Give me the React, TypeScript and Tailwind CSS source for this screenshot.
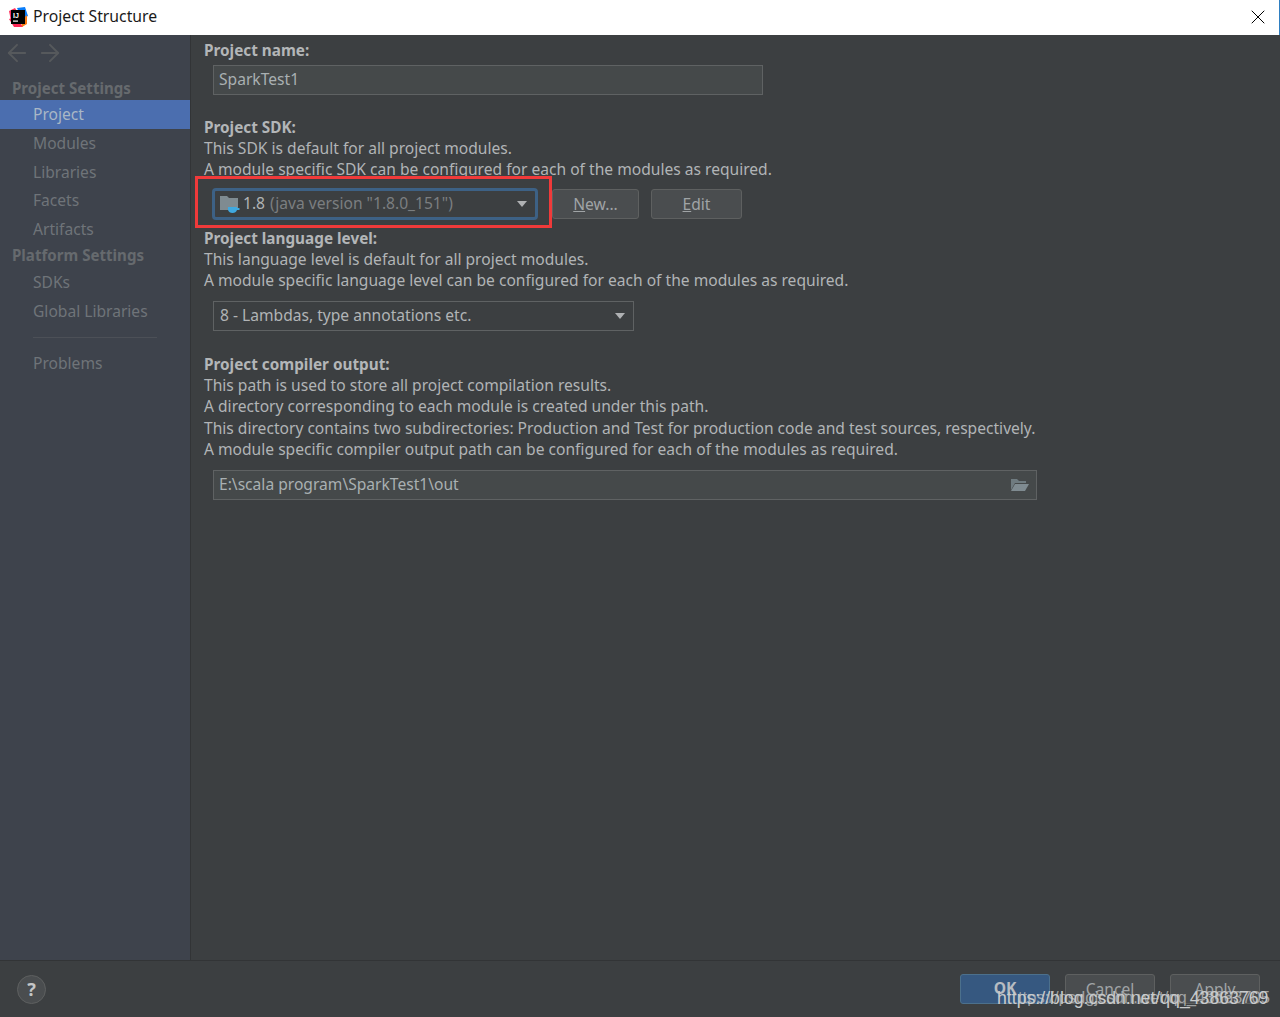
import React from "react";
import { ArrowLeft, ArrowRight, X } from "lucide-react";

function Caret() {
  return <span className="w-0 h-0 border-l-[5.5px] border-r-[5.5px] border-t-[6px] border-l-transparent border-r-transparent border-t-[#afb1b3]" />;
}

function Logo() {
  return (
    <svg width="20" height="20" viewBox="0 0 20 20" className="shrink-0">
      <path d="M1 4 L7 1 L10 6 L3 14 Z" fill="#fe315d" />
      <path d="M9 1 L17 0 L20 9 L14 12 Z" fill="#087cfa" />
      <path d="M1 12 L6 20 L15 20 L8 10 Z" fill="#fe2857" />
      <path d="M13 14 L19 8 L19 17 L14 20 Z" fill="#f97a12" />
      <rect x="3" y="3" width="14" height="14" fill="#000" />
      <text x="5" y="10.5" fill="#fff" fontSize="7" fontWeight="700" fontFamily="'Liberation Sans', sans-serif">IJ</text>
      <rect x="5" y="13.5" width="5" height="1.2" fill="#fff" />
    </svg>
  );
}

function SideItem({ label, active }: { label: string; active?: boolean }) {
  return (
    <div className={"h-[28.5px] pl-[33px] flex items-center text-[15.6px] " + (active ? "bg-[#4b6eaf] text-[#a9b7c6]" : "pt-[2px] text-[#6f7479]")}>
      {label}
    </div>
  );
}

function SideHeading({ label, pad }: { label: string; pad: string }) {
  return <div className={"h-[25px] pl-3 flex items-center text-[15.1px] font-bold text-[#666a6e] " + pad}>{label}</div>;
}

function Btn({ children, w }: { children: React.ReactNode; w: string }) {
  return (
    <div className={"h-[30px] pt-[1px] rounded-[3px] border border-[#5e6060] bg-[#4a4d4f] flex items-center justify-center text-[15.6px] text-[#a0a4a6] " + w}>
      {children}
    </div>
  );
}

function Heading({ children }: { children: React.ReactNode }) {
  return <div className="h-[21px] leading-[21px] text-[15.3px] font-bold text-[#b3b6b8]">{children}</div>;
}

function Line({ children }: { children: React.ReactNode }) {
  return <div className="h-[21px] leading-[21px] whitespace-nowrap">{children}</div>;
}

export default function App() {
  return (
    <div className="w-[1280px] h-[1017px] flex flex-col relative overflow-hidden bg-[#3c3f41] font-['Noto_Sans','Open_Sans',sans-serif] text-[15.6px] text-[#b1b4b6]">
      <header className="h-[35px] shrink-0 bg-white flex items-center pl-[8px] pr-[9px] pb-[2px] border-r border-[#2f7fc1]">
        <Logo />
        <span className="ml-[5px] text-[#1a1a1a] text-[15.75px]">Project Structure</span>
        <X size={24} strokeWidth={1} className="ml-auto text-black" />
      </header>

      <div className="flex-1 flex min-h-0">
        <aside className="w-[191px] shrink-0 bg-[#3e434c] border-r border-[#323436] flex flex-col">
          <div className="h-[36px] pl-[3px] flex items-center gap-[5px] text-[#56595c]">
            <ArrowLeft size={28} strokeWidth={1.7} />
            <ArrowRight size={28} strokeWidth={1.7} />
          </div>
          <div className="mt-[4px]">
            <SideHeading label="Project Settings" pad="pt-[2px]" />
          </div>
          <SideItem label="Project" active />
          <SideItem label="Modules" />
          <SideItem label="Libraries" />
          <SideItem label="Facets" />
          <SideItem label="Artifacts" />
          <SideHeading label="Platform Settings" pad="pb-[0px]" />
          <SideItem label="SDKs" />
          <SideItem label="Global Libraries" />
          <div className="mt-[12px] mb-[11px] ml-[33px] mr-[33px] h-px bg-[#4c5057]" />
          <SideItem label="Problems" />
        </aside>

        <main className="flex-1 pl-[13px] pt-[5px]">
          <Heading>Project name:</Heading>
          <div className="mt-[4px] ml-[9px] w-[550px] h-[30px] border border-[#5f6263] bg-[#45494a] pl-[5px] flex items-center text-[#a9b0b2]">
            SparkTest1
          </div>

          <div className="mt-[22px]"><Heading>Project SDK:</Heading></div>
          <Line>This SDK is default for all project modules.</Line>
          <Line>A module specific SDK can be configured for each of the modules as required.</Line>

          <div className="mt-[8px] ml-[8px] flex items-center">
            <div className="w-[326px] h-[32px] rounded-[4px] border-[3px] border-[#3d6185] bg-[#3c3f41] flex items-center pl-[5px] pr-[8px]">
              <svg width="20" height="20" viewBox="0 0 20 20" className="shrink-0">
                <path d="M0 2 H7 L9 4 H18 V16 H0 Z" fill="#7f8b91" />
                <path d="M8 13 H17 V14 H19.5 V16 H17 Q16 19 12.5 19 Q9 19 8 16 Z" fill="#40a9e0" />
              </svg>
              <span className="ml-[3px] text-[#b1b4b6]">1.8</span>
              <span className="ml-[5px] text-[#7b7e80]">(java version "1.8.0_151")</span>
              <span className="ml-auto flex"><Caret /></span>
            </div>
            <div className="ml-[14px]"><Btn w="w-[87px]"><span><u>N</u>ew...</span></Btn></div>
            <div className="ml-[12px]"><Btn w="w-[91px]"><span><u>E</u>dit</span></Btn></div>
          </div>

          <div className="mt-[8px]"><Heading>Project language level:</Heading></div>
          <Line>This language level is default for all project modules.</Line>
          <Line>A module specific language level can be configured for each of the modules as required.</Line>

          <div className="mt-[10px] ml-[9px] w-[421px] h-[30px] border border-[#5f6263] bg-[#3c3f41] flex items-center pl-[6px] pr-[8px] text-[#b1b4b6]">
            8 - Lambdas, type annotations etc.
            <span className="ml-auto flex"><Caret /></span>
          </div>

          <div className="mt-[23px]"><Heading>Project compiler output:</Heading></div>
          <Line>This path is used to store all project compilation results.</Line>
          <Line>A directory corresponding to each module is created under this path.</Line>
          <div className="mt-px"><Line>This directory contains two subdirectories: Production and Test for production code and test sources, respectively.</Line></div>
          <Line>A module specific compiler output path can be configured for each of the modules as required.</Line>

          <div className="mt-[10px] ml-[9px] w-[824px] h-[30px] border border-[#5f6263] bg-[#45494a] flex items-center pl-[5px] pr-[6px] text-[#a9b0b2]">
            E:\scala program\SparkTest1\out
            <svg width="20" height="14" viewBox="0 0 20 14" className="ml-auto">
              <path d="M1 1 H7 L9 3 H16 V5 H5 L1 12 Z" fill="#6f7b80" />
              <path d="M5 6 H19 L15 13 H1 Z" fill="#7f8b91" />
            </svg>
          </div>
        </main>
      </div>

      <footer className="h-[57px] shrink-0 border-t border-[#323436] flex items-center pl-[17px] pr-[20px]">
        <div className="w-[29px] h-[29px] rounded-full border border-[#5e6060] bg-[#4a4d4f] flex items-center justify-center text-[#c4c6c7] font-bold text-[18px]">?</div>
        <div className="ml-auto flex gap-[15px]">
          <div className="w-[90px] h-[30px] rounded-[3px] border border-[#4c708c] bg-[#365880] flex items-center justify-center font-bold text-[#b6bcc2]">OK</div>
          <Btn w="w-[90px]">Cancel</Btn>
          <Btn w="w-[90px]">Apply</Btn>
        </div>
      </footer>

      {/* red annotation + csdn watermark sit on top of the dialog */}
      <div className="absolute left-[195px] top-[176px] w-[357px] h-[52px] border-[3px] border-[#f03a3a]" />
      <div className="absolute left-[997px] top-[989px] font-['Liberation_Sans',sans-serif] text-[17.7px] leading-[18px] text-[#c9cbcc] whitespace-nowrap">https://blog.csdn.net/qq_43863769</div>
      <div className="absolute left-[1018px] top-[989px] font-['Liberation_Sans',sans-serif] text-[16.6px] leading-[18px] text-[#c9cbcc]/70 whitespace-nowrap">ttps://psdgjcsdn.wet/qq_43663705</div>
    </div>
  );
}
